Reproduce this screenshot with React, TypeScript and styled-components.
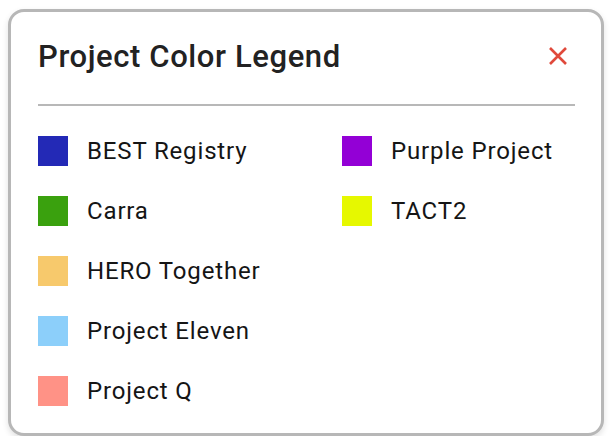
import React from "react";
import styled, { createGlobalStyle } from "styled-components";

const GlobalStyle = createGlobalStyle`
  html, body {
    margin: 0;
    padding: 0;
    background: #ffffff;
    font-family: Roboto, "Liberation Sans", Arial, sans-serif;
  }
  * { box-sizing: border-box; }
`;

const Card = styled.div`
  margin: 9px 0 0 8px;
  width: 596px;
  height: 427px;
  border: 3px solid #b7b7b7;
  border-radius: 16px;
  background: #ffffff;
  box-shadow: 0 3px 6px rgba(0, 0, 0, 0.12);
  padding: 0 26px 0 27px;
  display: flex;
  flex-direction: column;
`;

const Header = styled.div`
  height: 92px;
  display: flex;
  align-items: center;
  justify-content: space-between;
  padding-bottom: 4px;
`;

const Title = styled.h2`
  margin: 0;
  font-family: Roboto, "Liberation Sans", Arial, sans-serif;
  font-size: 31px;
  font-weight: 500;
  letter-spacing: 0.6px;
  color: #222222;
`;

const CloseButton = styled.button`
  border: none;
  background: none;
  padding: 0;
  margin-right: 6px;
  width: 22px;
  height: 22px;
  display: flex;
  align-items: center;
  justify-content: center;
  cursor: pointer;
`;

const Divider = styled.hr`
  margin: 0;
  border: none;
  height: 2px;
  background: #b8b8b8;
`;

const Legend = styled.div`
  display: grid;
  grid-auto-flow: column;
  grid-template-rows: repeat(5, 60px);
  grid-template-columns: 304px auto;
  padding-top: 15px;
`;

const Item = styled.div`
  display: flex;
  align-items: center;
  gap: 19px;
`;

const Swatch = styled.span<{ $color: string }>`
  width: 30px;
  height: 30px;
  flex: none;
  background: ${(p) => p.$color};
`;

const Label = styled.span`
  font-size: 24px;
  letter-spacing: 0.85px;
  color: #151515;
`;

const items = [
  { name: "BEST Registry", color: "#2329b6" },
  { name: "Carra", color: "#3aa10e" },
  { name: "HERO Together", color: "#f7c96c" },
  { name: "Project Eleven", color: "#8ccffa" },
  { name: "Project Q", color: "#ff9286" },
  { name: "Purple Project", color: "#9300d6" },
  { name: "TACT2", color: "#e6f800" },
];

export default function App() {
  return (
    <>
      <GlobalStyle />
      <Card>
        <Header>
          <Title>Project Color Legend</Title>
          <CloseButton aria-label="Close">
            <svg width="20" height="20" viewBox="0 0 20 20">
              <path d="M2 2 L18 18 M18 2 L2 18" stroke="#e0493b" strokeWidth="2.6" strokeLinecap="butt" />
            </svg>
          </CloseButton>
        </Header>
        <Divider />
        <Legend>
          {items.map((it) => (
            <Item key={it.name}>
              <Swatch $color={it.color} />
              <Label>{it.name}</Label>
            </Item>
          ))}
        </Legend>
      </Card>
    </>
  );
}
